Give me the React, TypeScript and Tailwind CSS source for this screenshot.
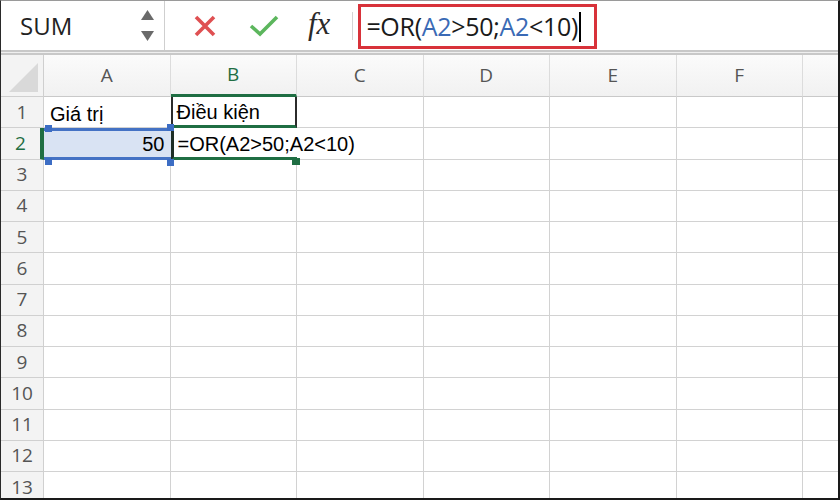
import React from "react";

const COLS = ["A", "B", "C", "D", "E", "F", ""];
const ROWS = Array.from({ length: 13 }, (_, i) => i + 1);
const cellFont = { fontFamily: '"Liberation Sans", Arial, sans-serif' };
const uiFont = { fontFamily: '"Open Sans", sans-serif' };

function cellClass(r: number, c: number) {
  if (r === 1 && c === 1)
    return "pl-[4px] border-l-2 border-l-[#2b2b2b] border-r-2 border-r-[#2b2b2b] border-b-[3px] border-b-[#1f6e43]";
  if (r === 1 && c === 0) return "border-r-0 border-b-[#d2d2d2] border-b";
  if (r === 2 && c === 0)
    return "bg-[#d9e3f3] border-y-[3px] border-[#4472c4] border-r-0 justify-end";
  if (r === 2 && c === 1)
    return "pl-[4px] border-l-[3px] border-l-[#1e2e26] border-b-[3px] border-b-[#1f6e43] border-r-0";
  return c === 6 ? "border-b border-[#d2d2d2]" : "border-r border-b border-[#d2d2d2]";
}

function Cell({ r, c }: { r: number; c: number }) {
  let content: React.ReactNode = null;
  if (r === 1 && c === 0) content = "Giá trị";
  if (r === 1 && c === 1) content = "Điều kiện";
  if (r === 2 && c === 0) content = "50";
  if (r === 2 && c === 1) content = "=OR(A2>50;A2<10)";
  return (
    <div
      className={`h-full min-w-0 flex items-end pb-[3px] px-[6px] text-[20px] leading-none text-black whitespace-nowrap overflow-visible ${cellClass(r, c)}`}
      style={cellFont}
    >
      {content}
    </div>
  );
}

function Handle({ className }: { className: string }) {
  return <div className={`absolute w-[7px] h-[7px] ${className}`} />;
}

export default function App() {
  return (
    <div className="relative w-[840px] h-[500px] overflow-hidden bg-white border-r-2 border-b-2 border-l border-t border-r-[#1a1a1a] border-b-[#1a1a1a] border-l-[#2a2a2a] border-t-[#9a9a9a] box-border">
      {/* Formula bar */}
      <div className="flex h-[49px] items-stretch bg-white" style={uiFont}>
        <div className="w-[164px] flex items-center justify-between pl-[19px] pr-[10px] border-r border-[#cfcfcf]">
          <span className="text-[24px] text-[#222] leading-none">SUM</span>
          <div className="flex flex-col gap-[11px] items-center">
            <svg width="13" height="10" viewBox="0 0 13 10"><polygon points="6.5,0 13,10 0,10" fill="#6a6a6a" /></svg>
            <svg width="13" height="10" viewBox="0 0 13 10"><polygon points="0,0 13,0 6.5,10" fill="#6a6a6a" /></svg>
          </div>
        </div>
        <div className="flex items-center pl-[29px]">
          <svg width="22" height="22" viewBox="0 0 22 22">
            <path d="M2 2 L20 20 M20 2 L2 20" stroke="#df5052" strokeWidth="3.6" />
          </svg>
          <svg className="ml-[33px]" width="30" height="24" viewBox="0 0 30 24">
            <path d="M2 12 L11 20 L28 3" stroke="#5cb65d" strokeWidth="3.6" fill="none" />
          </svg>
          <span
            className="ml-[29px] text-[31px] italic text-[#2a2a2a] leading-none -mt-[4px]"
            style={{ fontFamily: '"Liberation Serif", "Times New Roman", serif' }}
          >
            fx
          </span>
          <div className="ml-[22px] w-px h-[28px] bg-[#d4d4d4]" />
        </div>
        <div className="ml-[5px] mt-[3px] mb-[1px] w-[239px] border-[3px] border-[#d8323a] flex items-center pl-[5px]">
          <span className="text-[25px] leading-none text-[#1a1a1a] whitespace-nowrap tracking-[-0.3px]">
            =OR(<span className="text-[#3a6ab5]">A2</span>&gt;50;<span className="text-[#3a6ab5]">A2</span>&lt;10)
          </span>
          <div className="w-[2px] h-[30px] bg-black ml-[1px]" />
        </div>
      </div>
      {/* double separator */}
      <div className="h-[5px] border-t-2 border-b-2 border-[#c8c8c8] bg-[#efefef]" />

      {/* Grid */}
      <div
        className="grid"
        style={{
          gridTemplateColumns: "43px repeat(6, 126.5px) 1fr",
          gridTemplateRows: "42px repeat(13, 31.25px)",
        }}
      >
        <div className="bg-[#f3f3f3] border-r border-b border-[#cfcfcf] flex items-end justify-end pr-[4px] pb-[4px]">
          <svg width="30" height="29" viewBox="0 0 30 29">
            <polygon points="0,29 29,29 29,0" fill="#d9d9d9" />
          </svg>
        </div>
        {COLS.map((c, i) => (
          <div
            key={"h" + i}
            className={`flex items-center justify-center bg-gradient-to-b from-[#fbfbfb] to-[#f1f1f1] text-[19px] leading-none ${
              c === "B" ? "text-[#1f6e43] border-b-[3px] border-b-[#1f6e43]" : "text-[#555] border-b border-b-[#c9c9c9]"
            } ${i < 6 ? "border-r border-r-[#dcdcdc]" : ""}`}
            style={uiFont}
          >
            {c}
          </div>
        ))}
        {ROWS.map((r) => (
          <React.Fragment key={r}>
            <div
              className={`flex items-center justify-center bg-[#f3f3f3] border-b border-b-[#d0d0d0] text-[19px] leading-none ${
                r === 2 ? "text-[#1f6e43] border-r-[4px] border-r-[#1f6e43]" : "text-[#555] border-r border-r-[#d0d0d0]"
              }`}
              style={uiFont}
            >
              {r}
            </div>
            {COLS.map((_, c) => (
              <Cell key={c} r={r} c={c} />
            ))}
          </React.Fragment>
        ))}
      </div>

      {/* Selection handles (overlay) */}
      <Handle className="left-[44px] top-[124px] bg-[#3c6dc4]" />
      <Handle className="left-[166px] top-[123px] bg-[#3c6dc4]" />
      <Handle className="left-[44px] top-[157px] bg-[#3c6dc4]" />
      <Handle className="left-[166px] top-[158px] bg-[#3c6dc4]" />
      <Handle className="left-[291px] top-[157px] w-[8px] bg-[#1f6e43]" />
    </div>
  );
}
